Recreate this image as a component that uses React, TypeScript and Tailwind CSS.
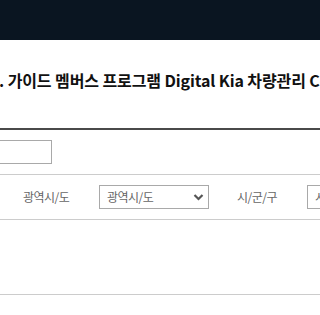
import React from 'react';

const KR = '"Noto Sans CJK KR", "Noto Sans", sans-serif';

function Select({ label, width }: { label: string; width: string }) {
  return (
    <div
      className={`flex h-[24px] shrink-0 items-center justify-between border border-[#a9a9a9] bg-white pl-[7px] pr-[4px] ${width}`}
    >
      <span className="text-[12px] leading-none tracking-[-0.5px] text-[#666]">{label}</span>
      <svg width="11" height="8" viewBox="0 0 11 8">
        <path d="M1.5 2 L5.5 6 L9.5 2" fill="none" stroke="#555" strokeWidth="2.2" />
      </svg>
    </div>
  );
}

export default function App() {
  return (
    <div className="h-[315px] w-[320px] overflow-hidden bg-white" style={{ fontFamily: KR }}>
      {/* top bar */}
      <div className="h-[40px] bg-[#0a1521]" />

      {/* title */}
      <div className="pt-[29px] pb-[37px]">
        <h1 className="ml-[-1px] whitespace-nowrap text-[16px] font-bold leading-[22px] tracking-[-0.1px] text-[#111]">
          . 가이드 멤버스 프로그램 Digital Kia 차량관리 Connect
        </h1>
      </div>

      {/* search table */}
      <div className="border-t-2 border-[#4a4a4a]">
        <div className="border-b border-[#cccccc] py-[10px]">
          <div className="ml-[-60px] h-[24px] w-[112px] border border-[#a9a9a9] bg-white" />
        </div>

        <div className="flex items-center gap-[28px] border-b border-[#cccccc] py-[10px] pl-[23px] whitespace-nowrap">
          <span className="w-[48px] shrink-0 text-[12px] tracking-[-0.5px] text-[#666]">광역시/도</span>
          <Select label="광역시/도" width="w-[110px]" />
          <span className="w-[42px] shrink-0 text-[12px] tracking-[-0.5px] text-[#666]">시/군/구</span>
          <Select label="시/군/구" width="w-[110px]" />
        </div>

        <div className="h-[75px] border-b border-[#cccccc]" />
      </div>
    </div>
  );
}
